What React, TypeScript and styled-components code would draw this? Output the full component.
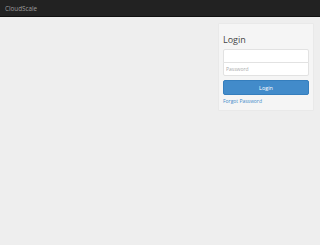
import React from 'react';
import styled, { createGlobalStyle } from 'styled-components';

const GlobalStyle = createGlobalStyle`
  html, body {
    margin: 0;
    padding: 0;
    background: #eeeeee;
    font-family: "Open Sans", "Liberation Sans", sans-serif;
  }
  #root {
    min-height: 245px;
  }
`;

const Navbar = styled.header`
  height: 17px;
  background: #222222;
  border-bottom: 1px solid #111;
  display: flex;
  align-items: center;
  padding-left: 5px;
  box-sizing: border-box;
`;

const Brand = styled.span`
  color: #9d9d9d;
  font-size: 6.3px;
`;

const Main = styled.main`
  display: flex;
  justify-content: flex-end;
  padding: 6px 6px 0 0;
`;

const Panel = styled.section`
  width: 96px;
  box-sizing: border-box;
  background: #f5f5f5;
  border: 1px solid #e9e9e9;
  border-radius: 1px;
  padding: 10px 4px 5px 4px;
  display: flex;
  flex-direction: column;
`;

const Title = styled.h2`
  margin: 0 0 3px 0;
  font-size: 9px;
  font-weight: 400;
  color: #444;
  line-height: 12px;
`;

const Input = styled.input<{ $first?: boolean }>`
  display: block;
  width: 100%;
  height: 14px;
  box-sizing: border-box;
  border: 1px solid #e2e2e2;
  background: #fff;
  font-family: inherit;
  font-size: 5px;
  padding: 0 2px;
  margin: 0;
  margin-top: ${(p) => (p.$first ? '0' : '-1px')};
  border-radius: ${(p) => (p.$first ? '2px 2px 0 0' : '0 0 2px 2px')};
  outline: none;
  &::placeholder {
    color: #aaa;
  }
`;

const Button = styled.button`
  margin-top: 4px;
  height: 15px;
  width: 100%;
  background: #428bca;
  border: 1px solid #357ebd;
  border-radius: 2px;
  color: #fff;
  font-family: inherit;
  font-size: 5.5px;
  padding: 0;
`;

const Forgot = styled.a`
  margin-top: 3px;
  color: #428bca;
  font-size: 5px;
  text-decoration: none;
  line-height: 7px;
`;

export default function App() {
  return (
    <>
      <GlobalStyle />
      <Navbar>
        <Brand>CloudScale</Brand>
      </Navbar>
      <Main>
        <Panel>
          <Title>Login</Title>
          <Input $first type="text" />
          <Input type="password" placeholder="Password" />
          <Button>Login</Button>
          <Forgot href="#">Forgot Password</Forgot>
        </Panel>
      </Main>
    </>
  );
}
